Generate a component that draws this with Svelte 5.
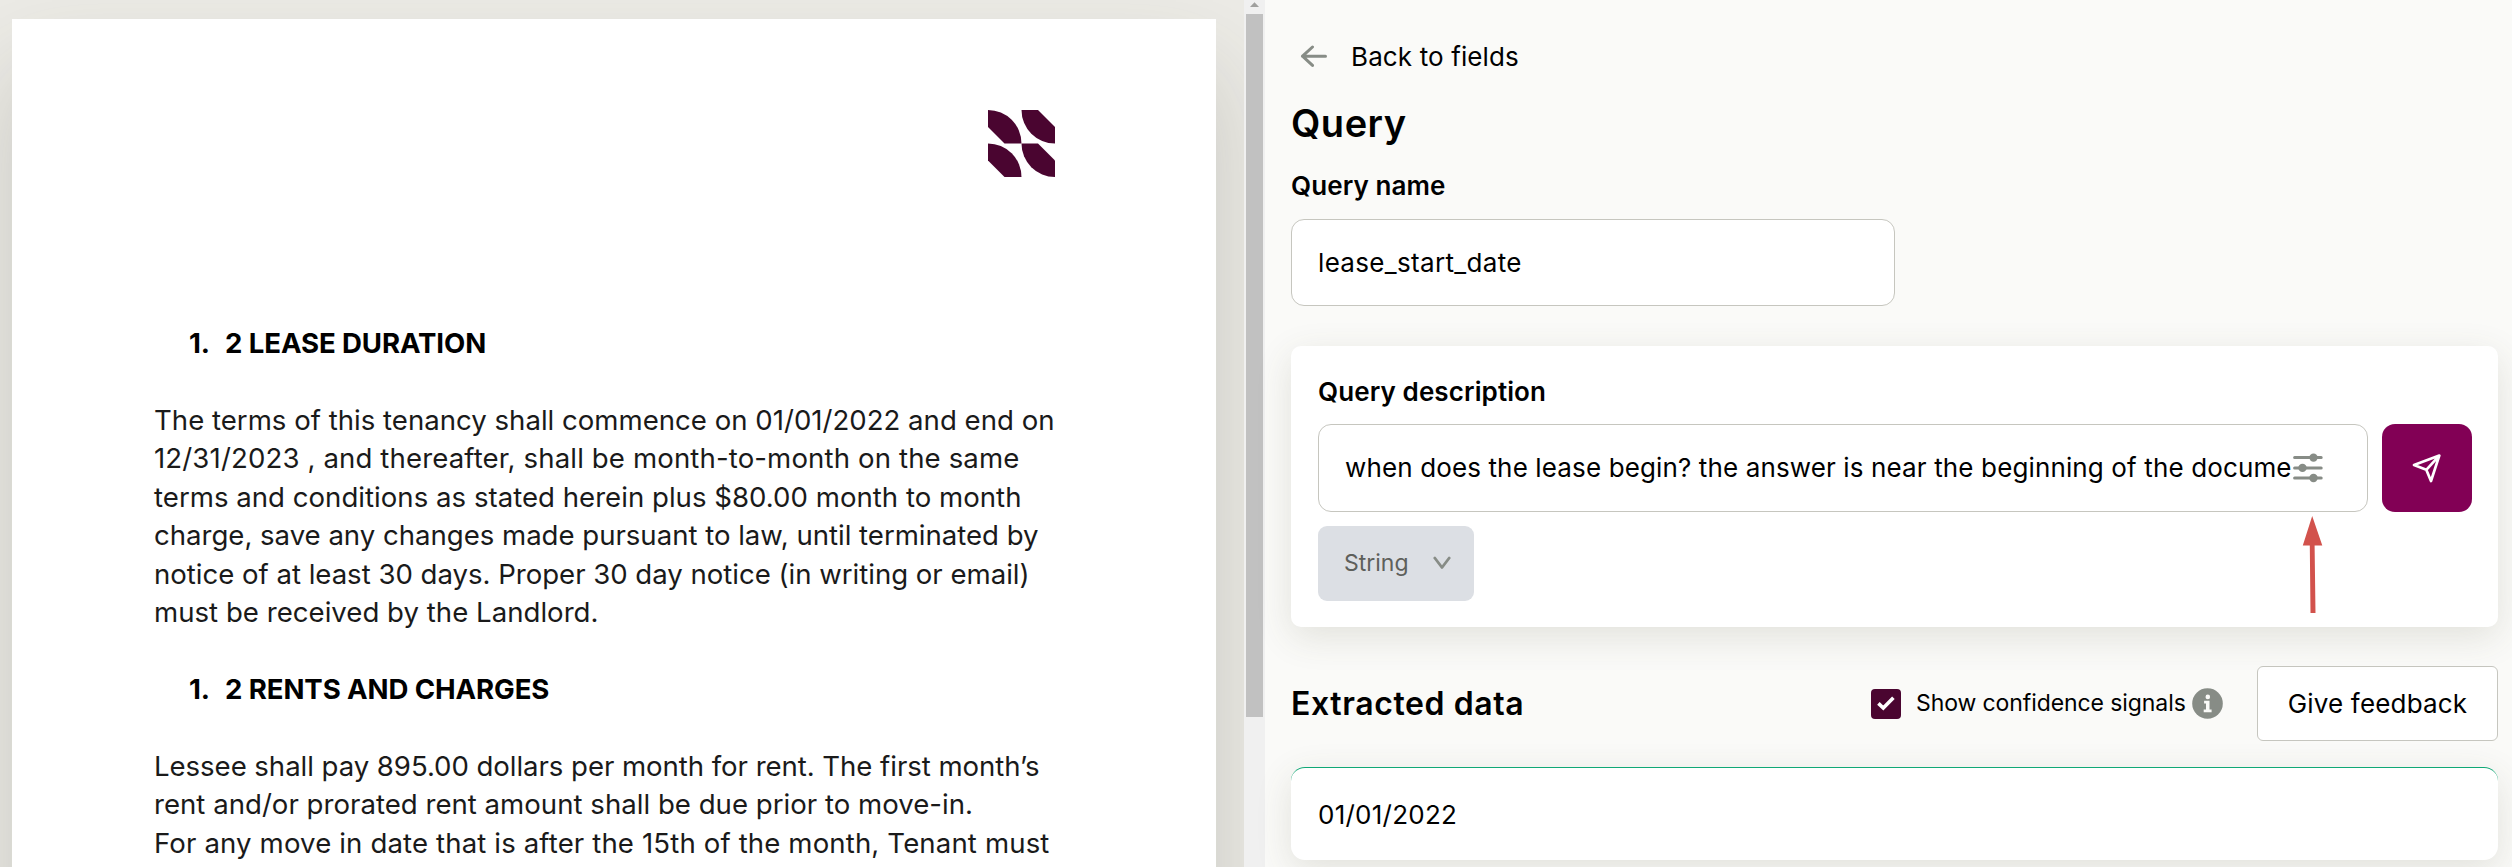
<script>
  const sections = [
    {
      title: '2 LEASE DURATION',
      lines: [
        ['The terms of this tenancy shall commence on 01/01/2022 and end on', 900.5],
        ['12/31/2023 , and thereafter, shall be month-to-month on the same', 865.5],
        ['terms and conditions as stated herein plus $80.00 month to month', 867.5],
        ['charge, save any changes made pursuant to law, until terminated by', 884.5],
        ['notice of at least 30 days. Proper 30 day notice (in writing or email)', 875.5],
        ['must be received by the Landlord.', 444.5],
      ],
    },
    {
      title: '2 RENTS AND CHARGES',
      lines: [
        ['Lessee shall pay 895.00 dollars per month for rent. The first month’s', 885.5],
        ['rent and/or prorated rent amount shall be due prior to move-in.', 819],
        ['For any move in date that is after the 15th of the month, Tenant must', 895.5],
      ],
    },
  ];
  let name = $state('lease_start_date');
  const description = 'when does the lease begin? the answer is near the beginning of the docume';

  function fit(node, width) {
    const apply = () => {
      node.style.letterSpacing = '0px';
      const w = node.getBoundingClientRect().width;
      node.style.letterSpacing = (width - w) / node.textContent.length + 'px';
    };
    apply();
    document.fonts.ready.then(apply);
  }
</script>

<div class="app">
  <section class="viewer">
    <article class="page">
      <svg class="logo" viewBox="0 0 67 67" width="67" height="67" fill="#4a0530">
        <path d="M0 0A33.5 33.5 0 0 1 33.5 33.5H16.5L0 17Z" />
        <path d="M33.5 0H50L67 17V33.5A33.5 33.5 0 0 1 33.5 0Z" />
        <path d="M0 33.5A33.5 33.5 0 0 1 33.5 67H16.5L0 50.5Z" />
        <path d="M33.5 33.5H50L67 50.5V67A33.5 33.5 0 0 1 33.5 33.5Z" />
      </svg>
      {#each sections as s}
        <h3><span>1.</span><span>{s.title}</span></h3>
        <div class="para">
          {#each s.lines as [text, width]}
            <div class="line"><span use:fit={width}>{text}</span></div>
          {/each}
        </div>
      {/each}
    </article>
  </section>

  <div class="scrollbar">
    <svg width="21" height="14" viewBox="0 0 21 14"><path d="M6 7L10.5 2.3L15 7Z" fill="#a0a09e" /></svg>
    <div class="thumb"></div>
  </div>

  <main class="panel">
    <div class="back">
      <svg width="28" height="22" viewBox="0 0 28 22" fill="none" stroke="#878c86" stroke-width="3" stroke-linecap="round" stroke-linejoin="round">
        <path d="M25.5 11.2H2.5M12.5 2L2.5 11.2L12.5 20.4" />
      </svg>
      <span>Back to fields</span>
    </div>
    <h1>Query</h1>
    <div class="label">Query name</div>
    <div class="field name">{name}</div>

    <section class="card">
      <div class="label">Query description</div>
      <div class="row">
        <div class="field desc">
          <span class="value">{description}</span>
          <svg width="30" height="30" viewBox="0 0 30 30" stroke="#878c86" stroke-width="3" stroke-linecap="round" fill="#878c86">
            <path d="M1.6 4.6H28.2M1.6 14.9H28.2M1.6 25H28.2" />
            <g stroke="none"><circle cx="20.5" cy="4.6" r="4.2" /><circle cx="9.5" cy="14.9" r="4.2" /><circle cx="20.5" cy="25" r="4.2" /></g>
          </svg>
        </div>
        <button class="send" aria-label="Send">
          <svg width="30" height="30" viewBox="0 0 30 30" fill="none" stroke="#fff" stroke-width="2.7" stroke-linejoin="round" stroke-linecap="round">
            <path d="M27.3 2.6L2 12.1L14.3 16.8L19 28Z M27.3 2.6L14.3 16.8" />
          </svg>
        </button>
      </div>
      <div class="select">
        <span>String</span>
        <svg width="18" height="14" viewBox="0 0 18 14" fill="none" stroke="#878c86" stroke-width="2.8" stroke-linecap="round" stroke-linejoin="round"><path d="M1.8 2L9 11.5L16.2 2" /></svg>
      </div>
      <svg class="pointer" width="22" height="98" viewBox="0 0 22 98" fill="#d2524c"><path d="M10.2 0L20.3 29.5H12.6L13.5 97H8.5L7.8 29.5H.8Z" /></svg>
    </section>

    <div class="results">
      <h2>Extracted data</h2>
      <div class="tools">
        <span class="check">
          <svg width="18" height="15" viewBox="0 0 18 15" fill="none" stroke="#fff" stroke-width="3.6"><path d="M1.4 7.4L6.3 12L16.4 1.8" /></svg>
        </span>
        <span class="signals">Show confidence signals</span>
        <svg class="info" width="31" height="31" viewBox="0 0 31 31">
          <circle cx="15.5" cy="15.5" r="15.3" fill="#878c86" />
          <circle cx="15.8" cy="8.9" r="2.3" fill="#fafaf8" />
          <path d="M12.1 12.7H17.5V21.5H19.6V24.2H11.7V21.5H14V15.4H12.1Z" fill="#fafaf8" />
        </svg>
        <button class="feedback">Give feedback</button>
      </div>
    </div>
    <div class="result">01/01/2022</div>
  </main>
</div>

<style>
  :global(body) { margin: 0; overflow: hidden; }
  .app, .app * { box-sizing: border-box; }
  .app { display: flex; width: 2512px; height: 867px; overflow: hidden; font-family: Inter, sans-serif; color: #000; }
  h1, h2, h3 { margin: 0; }
  button { font: inherit; padding: 0; color: inherit; }
  svg { display: block; flex: none; }

  .viewer { width: 1244px; padding: 19px 28px 0 12px; background: #ecebe6; overflow: hidden; }
  .page { height: 1500px; padding: 90.5px 0 0 142px; background: #fff; box-shadow: 0 50px 90px rgba(60, 60, 45, .2); color: #1a1a1a; font-size: 27.6px; line-height: 38.45px; }
  .line { white-space: pre; }
  .logo { margin: 0 0 147.5px 834px; }
  h3 { display: flex; padding-left: 35px; font-size: 27.6px; font-weight: 700; letter-spacing: -.1px; color: #000; white-space: nowrap; }
  h3 span:first-child { width: 36px; }
  .para { padding: 38.45px 0; }

  .scrollbar { width: 21px; background: #f0f0f0; }
  .thumb { height: 703px; margin: 0 2px; background: #c1c1c1; }

  .panel { flex: 1; padding: 0 14px 0 26px; background: #fafaf8; font-size: 26px; font-weight: 400; }
  .back { display: flex; align-items: center; gap: 23px; height: 38px; margin: 37px 0 0 9px; letter-spacing: .12px; }
  h1 { margin-top: 24px; height: 48px; line-height: 48px; font-size: 38px; font-weight: 600; letter-spacing: .5px; }
  .label { height: 36px; line-height: 36px; font-size: 26px; font-weight: 600; letter-spacing: .1px; }
  h1 + .label { margin-top: 21px; }
  .field { display: flex; align-items: center; height: 88px; padding-left: 26px; border: 1px solid #c6c6bf; border-radius: 13px; background: #fff; }
  .field.name { width: 604px; height: 87px; margin-top: 15px; padding-bottom: 1px; letter-spacing: .33px; }

  .card { position: relative; height: 281px; margin-top: 40px; padding: 28px 26px 0 27px; border-radius: 10px; background: #fff; box-shadow: 0 10px 36px rgba(80, 75, 50, .14); }
  .row { display: flex; gap: 14px; margin-top: 14px; }
  .desc { width: 1050px; }
  .value { width: 948px; padding-bottom: 1px; white-space: pre; letter-spacing: .13px; }
  .send { display: grid; place-items: center; width: 90px; height: 88px; border: 0; border-radius: 13px; background: #820055; }
  .select { display: flex; align-items: center; justify-content: space-between; width: 156px; height: 75px; margin-top: 14px; padding: 0 23px 1px 26px; border-radius: 9px; background: #dcdfe4; color: #5e605b; font-size: 23px; }
  .pointer { position: absolute; left: 1011px; top: 170px; }

  .results { display: flex; align-items: center; justify-content: space-between; height: 75px; margin-top: 39px; }
  h2 { font-size: 32px; font-weight: 600; letter-spacing: .6px; }
  .tools { display: flex; align-items: center; }
  .check { display: grid; place-items: center; width: 30px; height: 30px; border-radius: 4px; background: #4a0530; }
  .signals { margin-left: 15px; width: 276px; padding-bottom: 1px; font-size: 23px; letter-spacing: -.09px; white-space: nowrap; }
  .feedback { width: 241px; height: 75px; margin-left: 34px; border: 1px solid #c6c6bf; border-radius: 6px; background: #fff; letter-spacing: .17px; }
  .result { display: flex; align-items: center; height: 93px; margin-top: 26px; padding-left: 27px; border-top: 1px solid #0fa876; border-radius: 14px; background: #fff; box-shadow: 0 10px 36px rgba(80, 75, 50, .14); letter-spacing: .25px; }
</style>
